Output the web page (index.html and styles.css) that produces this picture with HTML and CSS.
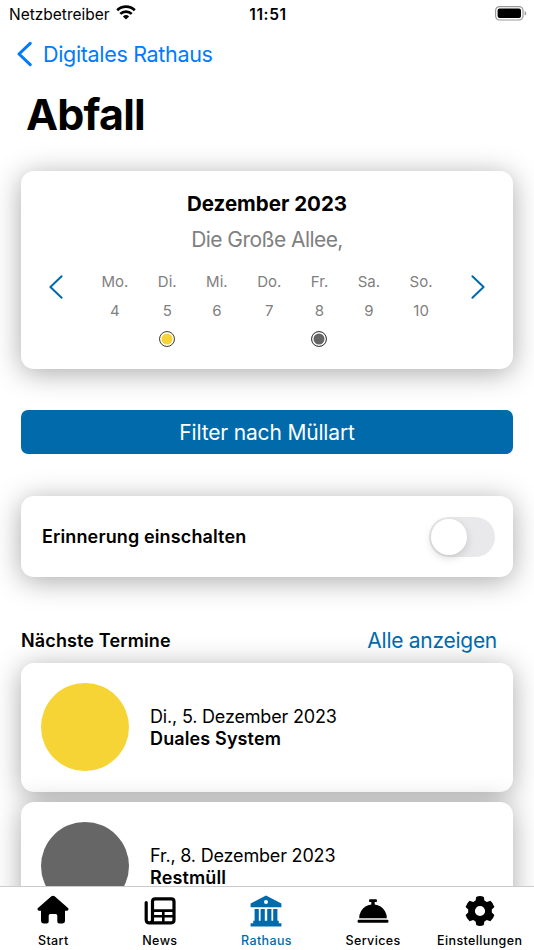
FILE: index.html
```html
<!DOCTYPE html>
<html lang="de">
  <head>
    <meta charset="UTF-8" />
    <meta name="viewport" content="width=device-width, initial-scale=1.0" />
    <title>Abfall</title>
    <link rel="stylesheet" href="styles.css">
  </head>
  <body>
    <div class="app">
      <div class="statusbar">
        <div class="carrier">
          <span>Netzbetreiber</span>
          <svg class="wifi" width="20" height="15" viewBox="0 0 20 15">
            <g fill="none" stroke="#000" stroke-width="2.7">
              <path d="M1.2 5.200a12.500 12.500 0 0 1 17.600 0" />
              <path d="M4.300 8.900a8.200 8.200 0 0 1 11.400 0" />
            </g>
            <path d="M10 14.500L6.900 11.500a4.600 4.600 0 0 1 6.200 0z" />
          </svg>
        </div>
        <div class="time">11:51</div>
        <svg class="battery" width="32" height="15" viewBox="0 0 32 15">
          <rect x=".6" y=".6" width="27.4" height="13.4" rx="4" fill="#fff" stroke="#999" stroke-width="1.2" />
          <rect x="2.6" y="2.6" width="23.4" height="9.4" rx="2" />
          <path d="M29.6 5v4.6q1.6-.7 1.6-2.3t-1.6-2.3z" fill="#999" />
        </svg>
      </div>

      <div class="navbar">
        <svg width="16" height="26" viewBox="0 0 16 26">
          <path d="M14.200 2.400L3 13l11.200 10.600" fill="none" stroke="#007aff" stroke-width="3" stroke-linecap="round" stroke-linejoin="round" />
        </svg>
        <a class="back">Digitales Rathaus</a>
      </div>

      <h1>Abfall</h1>

      <div class="content">
        <div class="card calendar">
          <div class="month">Dezember 2023</div>
          <div class="street">Die Große Allee,</div>
          <div class="week">
            <svg class="arrow" width="16" height="26" viewBox="0 0 16 26">
              <path d="M13.6 2.2L2.4 13l11.2 10.8" />
            </svg>
            <div class="days">
              <div class="day"><span>Mo.</span><span>4</span></div>
              <div class="day"><span>Di.</span><span>5</span><i class="dot yellow"></i></div>
              <div class="day"><span>Mi.</span><span>6</span></div>
              <div class="day"><span>Do.</span><span>7</span></div>
              <div class="day"><span>Fr.</span><span>8</span><i class="dot grey"></i></div>
              <div class="day"><span>Sa.</span><span>9</span></div>
              <div class="day"><span>So.</span><span>10</span></div>
            </div>
            <svg class="arrow" width="16" height="26" viewBox="0 0 16 26">
              <path d="M2.4 2.2L13.6 13 2.4 23.8" />
            </svg>
          </div>
        </div>

        <div class="button"><span>Filter nach Müllart</span></div>

        <div class="card reminder">
          <b>Erinnerung einschalten</b>
          <div class="switch"><div class="knob"></div></div>
        </div>

        <div class="heading">
          <b>Nächste Termine</b>
          <a class="all">Alle anzeigen</a>
        </div>

        <div class="card event">
          <div class="circle yellow"></div>
          <div class="info">
            <div class="date">Di., 5. Dezember 2023</div>
            <b>Duales System</b>
          </div>
        </div>
        <div class="card event">
          <div class="circle grey"></div>
          <div class="info">
            <div class="date">Fr., 8. Dezember 2023</div>
            <b>Restmüll</b>
          </div>
        </div>
      </div>

      <div class="tabbar">
        <div class="tab">
          <svg width="32" height="32" viewBox="0 0 32 32">
            <path d="M16 .7q.9 0 1.600.6L31 13q.8.8.4 1.800-.4.900-1.500.900H28v10.400q0 2.400-2.400 2.400h-3.300q-2 0-2-2v-5.900q0-1.600-1.600-1.600h-5.400q-1.600 0-1.600 1.600v5.900q0 2-2 2H6.400Q4 28.500 4 26.100V15.700H2.100q-1.100 0-1.500-.9-.4-1 .4-1.800L14.400 1.300q.7-.6 1.600-.6z" />
          </svg>
          <span>Start</span>
        </div>
        <div class="tab">
          <svg width="32" height="32" viewBox="0 0 32 32">
            <g fill="none" stroke="#000" stroke-width="3.200" stroke-linecap="round" stroke-linejoin="round">
              <path d="M2.200 7.500v17.200q0 3.100 3.200 3.100h21.800q2.800 0 2.800-2.800V6.600q0-2.800-2.800-2.800H11.300q-2.800 0-2.800 2.800v18.100q0 3.100-3.100 3.100" />
              <path d="M9 15.600h20.500M9 21.200h20.500M19.300 16v10" stroke-width="2.600" />
            </g>
          </svg>
          <span>News</span>
        </div>
        <div class="tab active">
          <svg width="32" height="32" viewBox="0 0 32 32">
            <path fill-rule="evenodd" d="M16 .6l15.400 8v3.600H.6V8.600zM16 5a2 2 0 1 0 0 4 2 2 0 0 0 0-4z" />
            <path d="M4.600 14h4.200v11.800h1.800V14h4.200v11.800h2.400V14h4.200v11.800h1.800V14h4.200v11.800h1.400v2.400h2.600v3.400H.6v-3.400h2.600v-2.400h1.400z" />
          </svg>
          <span>Rathaus</span>
        </div>
        <div class="tab">
          <svg width="32" height="32" viewBox="0 0 32 32">
            <path d="M12.900 4.200h6.200q.8 0 .8.900v1.100q0 .9-.8.900h-1.400v2.400q6.600.8 10.300 6.700 1.800 3 1.800 7H2.200q0-4 1.800-7 3.700-5.900 10.300-6.700V7.100h-1.400q-.8 0-.8-.9V5.100q0-.9.800-.9z" />
            <rect x=".6" y="24.800" width="30.800" height="3" rx="1" />
          </svg>
          <span>Services</span>
        </div>
        <div class="tab">
          <svg width="32" height="32" viewBox="0 0 32 32">
            <path fill-rule="evenodd" d="M12.200 2Q16 .2 19.800 2l.6 3.600 2.400 1.400L26.400 5.800q2.900 2.400 4 6.100l-2.600 2.500v3.200l2.600 2.500q-1.100 3.700-4 6.100L22.800 25l-2.400 1.400-.6 3.600q-3.800 1.800-7.600 0l-.6-3.600L9.200 25l-3.600 1.200q-2.900-2.400-4-6.100l2.600-2.500v-3.200l-2.600-2.500q1.100-3.700 4-6.100L9.200 7l2.400-1.400zM16 10.900a5.100 5.100 0 1 0 0 10.200 5.100 5.100 0 0 0 0-10.200z" />
          </svg>
          <span>Einstellungen</span>
        </div>
      </div>
    </div>
  </body>
</html>
```
FILE: styles.css
```css
* {
  box-sizing: border-box;
}

body {
  margin: 0;
  background-color: white;
  color: black;
  font-family: Inter, "Liberation Sans", sans-serif;
}

.app {
  display: flex;
  flex-direction: column;
  height: 950px;
  overflow: hidden;
}

.statusbar {
  display: grid;
  grid-template-columns: 1fr auto 1fr;
  align-items: center;
  flex: none;
  height: 27px;
  padding: 0 7px 0 9px;
  font-size: 15.5px;
}

.carrier {
  display: flex;
  align-items: center;
  gap: 6px;
  padding-top: 1px;
}

.wifi {
  margin-top: -3px;
}

.time {
  padding-top: 1px;
  font-weight: 600;
  letter-spacing: 0.6px;
}

.battery {
  justify-self: end;
}

.navbar {
  display: flex;
  align-items: center;
  flex: none;
  height: 54px;
  padding-left: 16px;
  gap: 11px;
}

.back {
  color: #007aff;
  font-size: 21.5px;
  letter-spacing: -0.33px;
}

h1 {
  flex: none;
  margin: 7px 0 0 26px;
  height: 52px;
  line-height: 52px;
  font-size: 43px;
  font-weight: 700;
  letter-spacing: -0.8px;
}

.content {
  flex: 1;
  min-height: 0;
  padding: 30.5px 21px 0;
}

.card {
  background-color: white;
  border-radius: 13px;
  box-shadow: 0 4px 28px rgba(0, 0, 0, 0.34);
}

.calendar {
  height: 198.5px;
  padding-top: 20.5px;
  text-align: center;
}

.month {
  line-height: 26px;
  font-size: 20.5px;
  font-weight: 700;
}

.street {
  margin-top: 9px;
  line-height: 28px;
  color: gray;
  font-size: 21px;
  letter-spacing: -0.55px;
}

.week {
  display: flex;
  justify-content: space-between;
  align-items: flex-start;
  margin-top: 16px;
  padding: 0 27px;
}

.arrow {
  margin-top: 4px;
  fill: none;
  stroke: #006aab;
  stroke-width: 2;
  stroke-linecap: round;
  stroke-linejoin: round;
}

.days {
  display: flex;
  gap: 29.5px;
  margin-top: 2px;
}

.day {
  display: flex;
  flex-direction: column;
  align-items: center;
  gap: 9px;
  color: gray;
  font-size: 15px;
  line-height: 20px;
}

.dot {
  width: 16px;
  height: 16px;
  margin-top: 1px;
  border: 1.5px solid #444;
  border-radius: 50%;
  box-shadow: inset 0 0 0 1.5px white;
}

.yellow {
  background-color: #f6d435;
}

.grey {
  background-color: #666;
}

.button {
  height: 44px;
  margin-top: 41px;
  border-radius: 7px;
  background-color: #006aab;
  color: white;
  font-size: 21px;
  line-height: 46px;
  letter-spacing: -0.17px;
  text-align: center;
}

.reminder {
  display: flex;
  justify-content: space-between;
  align-items: center;
  height: 81px;
  margin-top: 42px;
  padding: 0 18px 0 21px;
}

b {
  font-size: 18px;
  font-weight: 600;
  letter-spacing: 0.13px;
}

.switch {
  width: 66px;
  height: 40px;
  padding: 2px;
  border-radius: 20px;
  background-color: #e9e9eb;
}

.knob {
  width: 36px;
  height: 36px;
  border-radius: 50%;
  background-color: white;
  box-shadow: 0 3px 8px rgba(0, 0, 0, 0.15);
}

.heading {
  display: flex;
  justify-content: space-between;
  align-items: center;
  height: 44px;
  margin-top: 41.5px;
  padding-right: 16px;
}

.all {
  color: #006aab;
  font-size: 21px;
  letter-spacing: -0.27px;
}

.event {
  display: flex;
  align-items: center;
  gap: 21px;
  height: 129px;
  margin-bottom: 10px;
  padding-left: 20px;
}

.circle {
  width: 88px;
  height: 88px;
  border-radius: 50%;
}

.info {
  padding-top: 1px;
  line-height: 22px;
}

.date {
  font-size: 18px;
  letter-spacing: -0.18px;
}

.tabbar {
  position: relative;
  display: grid;
  grid-template-columns: repeat(5, 1fr);
  flex: none;
  height: 64px;
  padding-right: 1px;
  border-top: 1px solid #ccc;
  background-color: white;
}

.tab {
  display: flex;
  flex-direction: column;
  align-items: center;
  padding-top: 8px;
  font-size: 12.5px;
  font-weight: 500;
  line-height: 16px;
  letter-spacing: 0.38px;
}

.tab span {
  margin-top: 6px;
}

.active {
  color: #006aab;
  fill: #006aab;
}
```
